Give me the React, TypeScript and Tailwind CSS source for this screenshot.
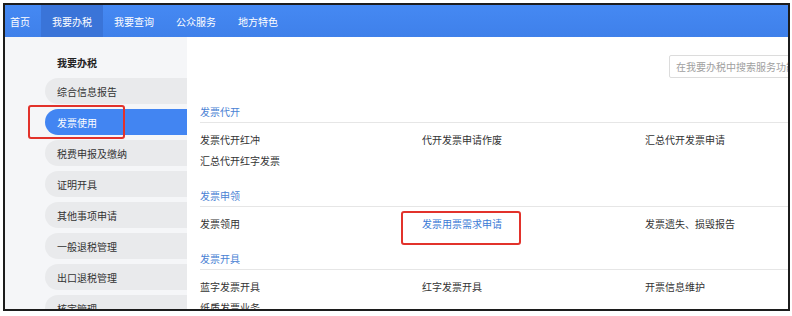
const tabs = ['首页', '我要办税', '我要查询', '公众服务', '地方特色'];

const menu = ['综合信息报告', '发票使用', '税费申报及缴纳', '证明开具', '其他事项申请', '一般退税管理', '出口退税管理', '核定管理'];

const sections = [
  {
    title: '发票代开',
    items: ['发票代开红冲', '代开发票申请作废', '汇总代开发票申请', '汇总代开红字发票'],
  },
  {
    title: '发票申领',
    items: ['发票领用', '发票用票需求申请', '发票遗失、损毁报告'],
  },
  {
    title: '发票开具',
    items: ['蓝字发票开具', '红字发票开具', '开票信息维护', '纸质发票业务'],
  },
];

export default function App() {
  return (
    <div
      className="w-[792px] h-[316px] bg-white pt-[3px] pl-[3px] text-[10px] text-[#333]"
      style={{ fontFamily: '"Noto Sans CJK SC", "Noto Sans", sans-serif' }}
    >
      <div className="relative w-[787px] h-[308px] border-2 border-[#1c1c1c] overflow-hidden flex flex-col">
        {/* top nav */}
        <div className="h-[32px] shrink-0 flex bg-gradient-to-b from-[#4589f3] to-[#3f80ea] text-white">
          {tabs.map((t, i) => (
            <div
              key={t}
              className={`flex items-center ${i === 0 ? 'pl-[5px] pr-[11px]' : 'px-[11px]'} ${i === 1 ? 'bg-[#3a74d8]' : ''}`}
            >
              {t}
            </div>
          ))}
        </div>

        <div className="flex flex-1 min-h-0">
          {/* side menu */}
          <div className="w-[182px] shrink-0 bg-[#f5f6f8] pl-[40px] pt-[16px]">
            <div className="h-[18px] flex items-center pl-[12px] font-bold text-[#222]">我要办税</div>
            <div className="mt-[7px] flex flex-col gap-[5px]">
              {menu.map((m) => (
                <div
                  key={m}
                  className={`h-[26px] flex items-center pl-[12px] rounded-l-full ${
                    m === '发票使用' ? 'bg-[#4285f2] text-white' : 'bg-[#e9eaec]'
                  }`}
                >
                  {m}
                </div>
              ))}
            </div>
          </div>

          {/* content */}
          <div className="flex-1 bg-white pl-[13px] pt-[18px]">
            <div className="ml-[469px] w-[160px] h-[23px] border border-[#dcdcdc] rounded-[2px] flex items-center pl-[6px] text-[#a0a0a0] whitespace-nowrap overflow-hidden">
              在我要办税中搜索服务功能
            </div>
            <div className="mt-[23px]">
              {sections.map((s) => (
                <div key={s.title} className="mb-[14px]">
                  <div className="h-[22px] flex items-center border-b border-[#e6e6e6] text-[#4a82d4]">{s.title}</div>
                  <div className="pt-[6px] grid grid-cols-[222px_223px_222px]">
                    {s.items.map((it) => (
                      <div
                        key={it}
                        className={`h-[21px] flex items-center whitespace-nowrap ${
                          it === '发票用票需求申请' ? 'text-[#3b7ad6]' : ''
                        }`}
                      >
                        {it}
                      </div>
                    ))}
                  </div>
                </div>
              ))}
            </div>
          </div>
        </div>

        {/* red highlight marks */}
        <div className="absolute left-[23px] top-[100px] w-[97px] h-[34px] border-2 border-[#e2322b] rounded-[3px]" />
        <div className="absolute left-[396px] top-[206px] w-[120px] h-[34px] border-2 border-[#e2322b] rounded-[3px]" />
      </div>
    </div>
  );
}
